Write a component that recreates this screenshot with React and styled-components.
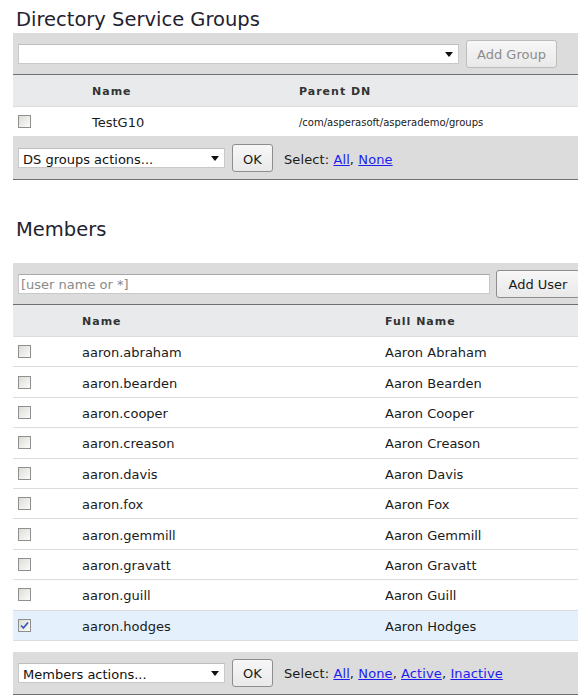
import React from 'react'
import styled, { createGlobalStyle } from 'styled-components'

const GlobalStyle = createGlobalStyle`
  html, body {
    margin: 0;
    padding: 0;
    background: #fff;
    overflow: hidden;
  }
  body {
    font-family: "DejaVu Sans", Verdana, sans-serif;
    font-size: 13px;
    color: #222;
  }
`

const Page = styled.div`
  padding-left: 13px;
  width: 572px;
`
const Heading = styled.h2`
  margin: ${(p) => p.$top}px 0 ${(p) => p.$bottom}px 3px;
  font-size: 19.5px;
  font-weight: normal;
  line-height: 24px;
  color: #1f2230;
`
const Toolbar = styled.div`
  display: flex;
  align-items: center;
  gap: ${(p) => p.$gap || 7}px;
  height: 41px;
  padding: 0 5px;
  background: #dcdcdd;
  border-bottom: 1px solid #707070;
`
const SelectBox = styled.div`
  position: relative;
  box-sizing: border-box;
  width: ${(p) => p.$width}px;
  height: 20px;
  padding: 1px 0 0 4px;
  line-height: 19px;
  background: #fff;
  border: 1px solid #c9c9c9;
  border-top-color: #bdbdbd;
  color: #111;
  font-size: 13px;
  white-space: nowrap;

  &::after {
    content: '';
    position: absolute;
    right: 5px;
    top: 7px;
    border-left: 4px solid transparent;
    border-right: 4px solid transparent;
    border-top: 5px solid #111;
  }
`
const TextInput = styled.div`
  box-sizing: border-box;
  width: ${(p) => p.$width}px;
  height: 20px;
  padding: 1px 0 0 2px;
  line-height: 18px;
  background: #fff;
  border: 1px solid #c9c9c9;
  border-top-color: #a8a8a8;
  color: #8a8a8a;
  font-size: 13px;
`
const Button = styled.button`
  box-sizing: border-box;
  flex: none;
  width: ${(p) => p.$width}px;
  height: 28px;
  padding: 2px 0 0;
  font-family: "DejaVu Sans", Verdana, sans-serif;
  font-size: 13px;
  color: ${(p) => (p.disabled ? '#8c8c8c' : '#1a1a1a')};
  background: linear-gradient(#f7f7f7, #e9e9e9);
  border: 1px solid ${(p) => (p.disabled ? '#bdbdbd' : '#8e8e8e')};
  border-radius: 3px;
`
const Grid = styled.div`
  display: grid;
  grid-template-columns: ${(p) => p.$cols};
  align-items: center;
  box-sizing: border-box;
  height: ${(p) => p.$height}px;
  padding-left: 5px;
  border-bottom: 1px solid #dcdcdc;
  background: ${(p) => (p.$head ? '#e9eaec' : p.$selected ? '#e4f1fd' : '#fff')};
`
const HeadCell = styled.div`
  padding-top: 2px;
  font-size: 11px;
  font-weight: bold;
  letter-spacing: 1px;
  color: #333;
`
const Cell = styled.div`
  padding-top: 2px;
  font-size: ${(p) => p.$size || 13}px;
  color: #1a1a1a;
  white-space: nowrap;
`
const Box = styled.span`
  display: flex;
  align-items: center;
  justify-content: center;
  box-sizing: border-box;
  width: 13px;
  height: 13px;
  border: 1px solid #8e8f8f;
  background: linear-gradient(135deg, #dcdcd7, #fbfbf9);
`
const Footer = styled.div`
  display: flex;
  align-items: center;
  height: 42px;
  margin-top: ${(p) => p.$top || 0}px;
  padding: 0 5px;
  background: #dcdcdd;
  border-bottom: 1px solid #707070;
`
const SelectLabel = styled.span`
  margin-left: 11px;
  padding-top: 2px;
  font-size: 13px;
  letter-spacing: 0.1px;
  color: #1a1a1a;
`
const LinkText = styled.a`
  color: #1d1df0;
  text-decoration: underline;
`

const Checkbox = ({ checked }) => (
  <Box>
    {checked && (
      <svg width="9" height="9" viewBox="0 0 9 9">
        <path d="M1 4.5 L3.4 7 L8 1.5" fill="none" stroke="#3a5cb8" strokeWidth="1.8" />
      </svg>
    )}
  </Box>
)

const Links = ({ items }) => (
  <SelectLabel>
    Select:{' '}
    {items.map((t, i) => (
      <React.Fragment key={t}>
        <LinkText href="#">{t}</LinkText>
        {i < items.length - 1 ? ', ' : ''}
      </React.Fragment>
    ))}
  </SelectLabel>
)

const members = [
  ['aaron.abraham', 'Aaron Abraham'],
  ['aaron.bearden', 'Aaron Bearden'],
  ['aaron.cooper', 'Aaron Cooper'],
  ['aaron.creason', 'Aaron Creason'],
  ['aaron.davis', 'Aaron Davis'],
  ['aaron.fox', 'Aaron Fox'],
  ['aaron.gemmill', 'Aaron Gemmill'],
  ['aaron.gravatt', 'Aaron Gravatt'],
  ['aaron.guill', 'Aaron Guill'],
  ['aaron.hodges', 'Aaron Hodges'],
]

const groupCols = '74px 207px 1fr'
const memberCols = '64px 303px 1fr'

export default function App() {
  return (
    <Page>
      <GlobalStyle />
      <Heading $top={8} $bottom={1}>Directory Service Groups</Heading>
      <Toolbar>
        <SelectBox $width={441} />
        <Button $width={91} disabled>Add Group</Button>
      </Toolbar>
      <Grid $head $cols={groupCols} $height={32}>
        <span />
        <HeadCell>Name</HeadCell>
        <HeadCell>Parent DN</HeadCell>
      </Grid>
      <Grid $cols={groupCols} $height={30}>
        <Checkbox />
        <Cell>TestG10</Cell>
        <Cell $size={10}>/com/asperasoft/asperademo/groups</Cell>
      </Grid>
      <Footer>
        <SelectBox $width={207}>DS groups actions...</SelectBox>
        <Button $width={41} style={{ marginLeft: 7 }}>OK</Button>
        <Links items={['All', 'None']} />
      </Footer>

      <Heading $top={38} $bottom={21}>Members</Heading>
      <Toolbar $gap={6}>
        <TextInput $width={474}>[user name or *]</TextInput>
        <Button $width={84}>Add User</Button>
      </Toolbar>
      <Grid $head $cols={memberCols} $height={32}>
        <span />
        <HeadCell>Name</HeadCell>
        <HeadCell>Full Name</HeadCell>
      </Grid>
      {members.map(([user, full], i) => (
        <Grid key={user} $cols={memberCols} $height={30.4} $selected={i === 9}>
          <Checkbox checked={i === 9} />
          <Cell>{user}</Cell>
          <Cell>{full}</Cell>
        </Grid>
      ))}
      <Footer $top={11}>
        <SelectBox $width={207}>Members actions...</SelectBox>
        <Button $width={41} style={{ marginLeft: 7 }}>OK</Button>
        <Links items={['All', 'None', 'Active', 'Inactive']} />
      </Footer>
    </Page>
  )
}
